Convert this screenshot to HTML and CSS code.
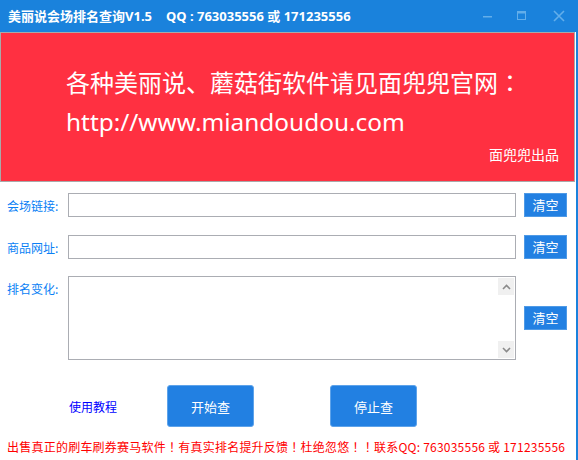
FILE: index.html
```html
<!DOCTYPE html>
<html lang="zh-CN">
<head>
<meta charset="utf-8">
<title>美丽说会场排名查询V1.5</title>
<link rel="stylesheet" href="styles.css">
</head>
<body>
<div class="titlebar">
  <div class="title"><span>美丽说会场排名查询V1.5</span><span class="qq">QQ : 763035556 或 171235556</span></div>
  <div class="controls">
    <svg class="ctl ctl-min" width="10" height="10" viewBox="0 0 10 10"><rect x="0" y="4" width="9" height="1.5" fill="#63aeea"/></svg>
    <svg class="ctl ctl-max" width="10" height="10" viewBox="0 0 10 10"><rect x="0.5" y="0.5" width="8" height="8" fill="none" stroke="#63aeea" stroke-width="1"/><rect x="0.5" y="0.5" width="8" height="2" fill="#63aeea"/></svg>
    <svg class="ctl ctl-close" width="12" height="12" viewBox="0 0 12 12"><path d="M1 1 L11 11 M11 1 L1 11" stroke="#63aeea" stroke-width="1.6" fill="none"/></svg>
  </div>
</div>
<div class="main">
  <div class="banner">
    <div class="banner-line1">各种美丽说、蘑菇街软件请见面兜兜官网<span class="p" lang="zh-TW">：</span></div>
    <div class="banner-line2">http://www.miandoudou.com</div>
    <div class="banner-sign">面兜兜出品</div>
  </div>
  <div class="form">
    <div class="row">
      <label class="lbl">会场链接:</label>
      <div class="input"></div>
      <button class="btn-clear">清空</button>
    </div>
    <div class="row row2">
      <label class="lbl">商品网址:</label>
      <div class="input"></div>
      <button class="btn-clear">清空</button>
    </div>
    <div class="row row3">
      <label class="lbl lbl-top">排名变化:</label>
      <div class="textarea">
        <div class="ta-content"></div>
        <div class="scrollbar">
          <div class="sb-btn"><svg width="9" height="6" viewBox="0 0 9 6"><path d="M1 5 L4.5 1.5 L8 5" stroke="#8a8a8a" stroke-width="1.6" fill="none"/></svg></div>
          <div class="sb-track"></div>
          <div class="sb-btn"><svg width="9" height="6" viewBox="0 0 9 6"><path d="M1 1 L4.5 4.5 L8 1" stroke="#8a8a8a" stroke-width="1.6" fill="none"/></svg></div>
        </div>
      </div>
      <button class="btn-clear">清空</button>
    </div>
    <div class="actions">
      <a class="help">使用教程</a>
      <button class="btn-big">开始查</button>
      <button class="btn-big btn-stop">停止查</button>
    </div>
    <div class="footer">出售真正的刷车刷券赛马软件<span class="p" lang="zh-TW">！</span>有真实排名提升反馈<span class="p" lang="zh-TW">！</span>杜绝忽悠<span class="p" lang="zh-TW">！！</span>联系QQ: 763035556 或 171235556</div>
  </div>
</div>
</body>
</html>
```
FILE: styles.css
```css
html, body {
  margin: 0;
  padding: 0;
}
body {
  width: 578px;
  height: 460px;
  overflow: hidden;
  background: #ffffff;
  font-family: "Noto Sans", "Noto Sans CJK SC", sans-serif;
}
.p {
  font-family: "Noto Sans CJK TC", sans-serif;
}
.titlebar {
  height: 32px;
  background: #1a82dc;
  display: flex;
  align-items: center;
  justify-content: space-between;
  box-sizing: border-box;
  padding-left: 8px;
}
.title {
  color: #ffffff;
  font-weight: bold;
  font-size: 13px;
  line-height: 18px;
  white-space: nowrap;
  display: flex;
  gap: 14px;
}
.controls {
  display: flex;
  align-items: center;
  height: 32px;
}
.ctl { display: block; }
.ctl-min { margin-right: 24px; margin-top: 2px; }
.ctl-max { margin-right: 26px; }
.ctl-close { margin-right: 13px; }
.main {
  height: 428px;
  border-right: 2px solid #1a82dc;
  box-sizing: border-box;
  width: 578px;
}
.banner {
  width: 575px;
  height: 150px;
  box-sizing: border-box;
  border: 1px solid #a9a9a9;
  background: #ff3041;
  color: #ffffff;
  padding: 29px 0 0 65px;
  display: flex;
  flex-direction: column;
}
.banner-line1 {
  font-size: 24px;
  line-height: 40px;
  white-space: nowrap;
  font-family: "Noto Sans CJK SC", sans-serif;
}
.banner-line2 {
  font-size: 24.4px;
  line-height: 40px;
  white-space: nowrap;
}
.banner-sign {
  align-self: flex-end;
  margin-right: 15px;
  margin-top: 2px;
  font-size: 14px;
  line-height: 20px;
  font-family: "Noto Sans CJK SC", sans-serif;
}
.form {
  padding-top: 11px;
  display: flex;
  flex-direction: column;
}
.row {
  display: flex;
  align-items: center;
  height: 24px;
}
.row2 { margin-top: 18px; }
.row3 {
  margin-top: 17px;
  height: 84px;
}
.lbl {
  width: 68px;
  flex: none;
  box-sizing: border-box;
  padding-left: 7px;
  color: #0a7ff5;
  font-size: 12px;
  line-height: 17px;
  font-family: "Noto Sans CJK SC", sans-serif;
  white-space: nowrap;
}
.lbl-top {
  align-self: flex-start;
  padding-top: 4px;
}
.input {
  width: 448px;
  flex: none;
  height: 24px;
  box-sizing: border-box;
  border: 1px solid #abadb3;
  background: #ffffff;
}
.textarea {
  width: 448px;
  flex: none;
  height: 84px;
  box-sizing: border-box;
  border: 1px solid #abadb3;
  display: flex;
}
.ta-content { flex: 1; }
.scrollbar {
  width: 16px;
  padding: 1px 1px 1px 0;
  display: flex;
  flex-direction: column;
}
.sb-btn {
  height: 17px;
  background: #f0f0f0;
  display: flex;
  align-items: center;
  justify-content: center;
}
.sb-track { flex: 1; }
.btn-clear {
  flex: none;
  margin: 0 0 0 8px;
  width: 43px;
  height: 24px;
  padding: 0;
  border: 1px solid #4f9ae6;
  background: #2280e2;
  color: #ffffff;
  font-size: 13px;
  font-family: "Noto Sans CJK SC", sans-serif;
  line-height: 20px;
}
.actions {
  margin-top: 25px;
  display: flex;
  align-items: center;
  height: 42px;
  padding-left: 69px;
}
.help {
  width: 98px;
  color: #0000ff;
  font-size: 12px;
  line-height: 17px;
  font-family: "Noto Sans CJK SC", sans-serif;
}
.btn-big {
  width: 87px;
  height: 42px;
  padding: 0;
  border: 1px solid #5ea3ea;
  border-radius: 3px;
  background: #2280e2;
  color: #ffffff;
  font-size: 13px;
  font-family: "Noto Sans CJK SC", sans-serif;
}
.btn-stop { margin-left: 76px; }
.footer {
  margin-top: 11px;
  padding-left: 7px;
  color: #ff0000;
  font-size: 12px;
  line-height: 17px;
  letter-spacing: 0.23px;
  white-space: nowrap;
  font-family: "Noto Sans CJK SC", sans-serif;
}
```
